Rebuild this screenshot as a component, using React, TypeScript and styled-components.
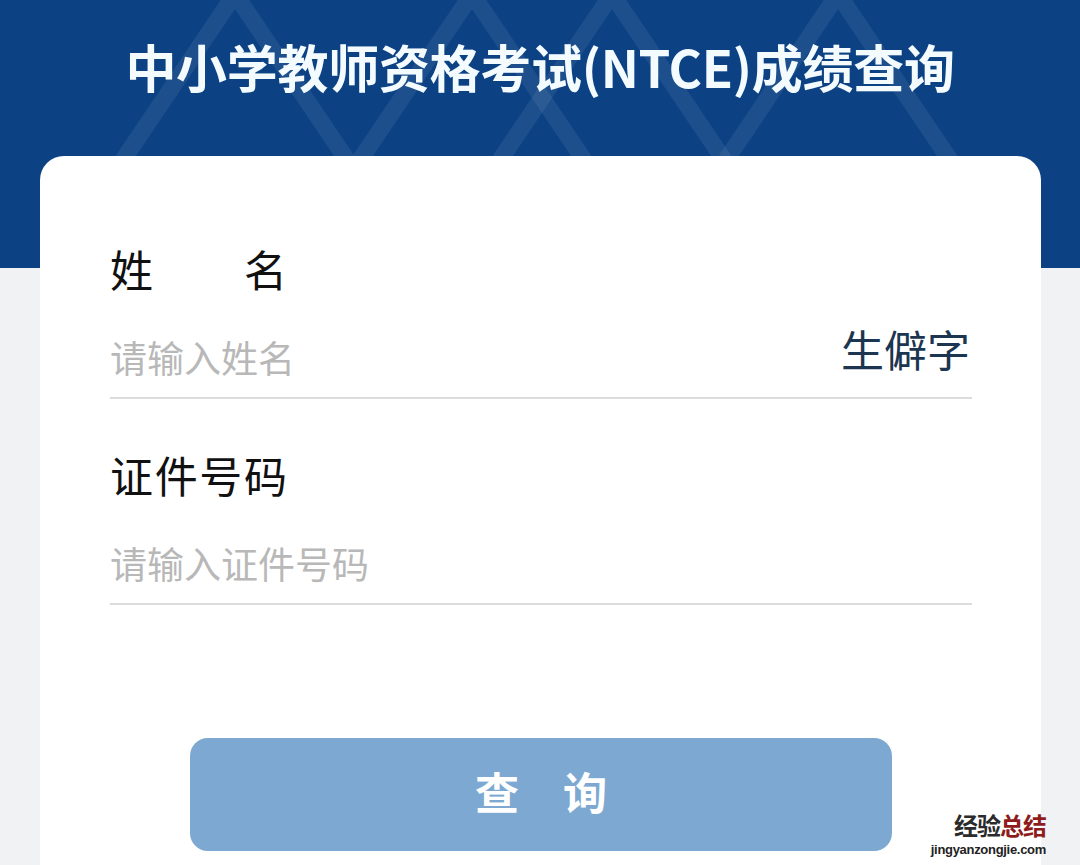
import React from "react";
import styled, { createGlobalStyle } from "styled-components";

const GlobalStyle = createGlobalStyle`
  html, body {
    margin: 0;
    padding: 0;
    background: #f1f2f4;
  }
  body {
    font-family: "Noto Sans CJK SC", "Noto Sans", sans-serif;
  }
  * {
    box-sizing: border-box;
  }
`;

const Page = styled.div`
  position: relative;
  width: 1080px;
  height: 865px;
  overflow: hidden;
  background: linear-gradient(180deg, #0c4284 0, #0c4284 268px, #f1f2f4 268px);
`;

const Header = styled.header`
  position: relative;
  height: 156px;
  padding-top: 36px;
`;

const Pattern = styled.svg`
  position: absolute;
  top: 0;
  left: 0;
  pointer-events: none;
`;

const Title = styled.h1`
  position: relative;
  margin: 0;
  text-align: center;
  color: #f4fbff;
  font-size: 51px;
  line-height: 60px;
  font-weight: 700;
  letter-spacing: -0.3px;
`;

const Card = styled.main`
  margin: 0 39px 0 40px;
  min-height: 760px;
  background: #ffffff;
  border-radius: 24px 24px 0 0;
  padding: 86px 69px 0 70px;
  display: flex;
  flex-direction: column;
`;

const Field = styled.section<{ $gap?: number }>`
  display: flex;
  flex-direction: column;
  margin-top: ${(p) => p.$gap ?? 0}px;
`;

const Label = styled.label`
  width: 177px;
  font-size: 43px;
  line-height: 52px;
  color: #111;
  text-align: justify;
  text-align-last: justify;
`;

const InputRow = styled.div`
  margin-top: 38px;
  display: flex;
  align-items: flex-start;
  height: 67px;
  border-bottom: 2px solid #dcdcdc;
`;

const Input = styled.input`
  flex: 1;
  height: 50px;
  border: none;
  outline: none;
  padding: 0;
  background: transparent;
  font-family: inherit;
  font-size: 37px;
  color: #333;
  &::placeholder {
    color: #b8b8b8;
  }
`;

const RareChar = styled.span`
  font-size: 43px;
  line-height: 32px;
  color: #1c3550;
  margin-right: 2px;
  cursor: pointer;
`;

const SubmitButton = styled.button`
  align-self: center;
  margin-top: 133px;
  width: 702px;
  height: 113px;
  padding: 0 0 8px;
  border: none;
  border-radius: 18px;
  background: #7da8d2;
  color: #ffffff;
  font-family: inherit;
  font-size: 44px;
  font-weight: 700;
  cursor: pointer;
`;

const Watermark = styled.div`
  position: absolute;
  right: 34px;
  bottom: 9px;
  display: flex;
  flex-direction: column;
  align-items: flex-end;
  line-height: 1;
`;

const MarkTitle = styled.span`
  font-size: 24px;
  font-weight: 700;
  color: #2b2b2b;
  letter-spacing: -1px;
  & b {
    color: #8e1c1c;
    font-weight: 700;
  }
`;

const MarkUrl = styled.span`
  margin-top: 6px;
  font-family: "Liberation Sans", Arial, sans-serif;
  font-size: 13px;
  font-weight: 700;
  color: #222;
  letter-spacing: -0.3px;
`;

const apexes = [235, 472, 612, 838];

export default function App() {
  return (
    <>
      <GlobalStyle />
      <Page>
        <Header>
          <Pattern width="1080" height="156" viewBox="0 0 1080 156">
            {apexes.map((x) => (
              <polyline
                key={x}
                points={`${x - 112},160 ${x},-6 ${x + 112},160`}
                fill="none"
                stroke="rgba(255,255,255,0.07)"
                strokeWidth="17"
                strokeLinejoin="miter"
              />
            ))}
          </Pattern>
          <Title>中小学教师资格考试(NTCE)成绩查询</Title>
        </Header>
        <Card>
          <Field>
            <Label>姓名</Label>
            <InputRow>
              <Input placeholder="请输入姓名" />
              <RareChar>生僻字</RareChar>
            </InputRow>
          </Field>
          <Field $gap={49}>
            <Label>证件号码</Label>
            <InputRow>
              <Input placeholder="请输入证件号码" />
            </InputRow>
          </Field>
          <SubmitButton>查　询</SubmitButton>
        </Card>
        <Watermark>
          <MarkTitle>
            经验<b>总结</b>
          </MarkTitle>
          <MarkUrl>jingyanzongjie.com</MarkUrl>
        </Watermark>
      </Page>
    </>
  );
}
